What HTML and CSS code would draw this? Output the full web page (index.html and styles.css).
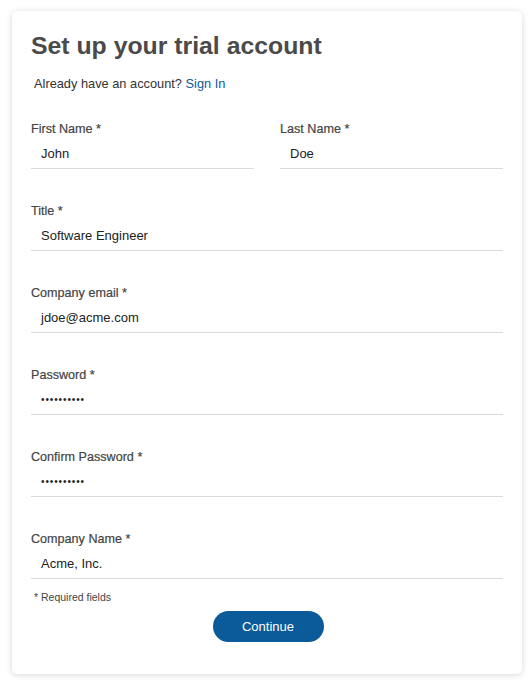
FILE: index.html
```html
<!DOCTYPE html>
<html lang="en">
<head>
<meta charset="utf-8">
<title>Set up your trial account</title>
<link rel="stylesheet" href="styles.css">
</head>
<body>
<main class="card">
  <h1 class="title">Set up your trial account</h1>
  <p class="signin">Already have an account? <a href="#">Sign In</a></p>
  <form class="form">
    <div class="row">
      <div class="field">
        <label>First Name *</label>
        <div class="value">John</div>
      </div>
      <div class="field">
        <label>Last Name *</label>
        <div class="value">Doe</div>
      </div>
    </div>
    <div class="field">
      <label>Title *</label>
      <div class="value">Software Engineer</div>
    </div>
    <div class="field">
      <label>Company email *</label>
      <div class="value">jdoe@acme.com</div>
    </div>
    <div class="field">
      <label>Password *</label>
      <div class="value dots">••••••••••</div>
    </div>
    <div class="field">
      <label>Confirm Password *</label>
      <div class="value dots">••••••••••</div>
    </div>
    <div class="field last">
      <label>Company Name *</label>
      <div class="value">Acme, Inc.</div>
    </div>
    <p class="req">* Required fields</p>
    <div class="actions"><button type="button" class="btn">Continue</button></div>
  </form>
</main>
</body>
</html>
```
FILE: styles.css
```css
html, body { margin: 0; padding: 0; background: #ffffff; }
body {
  font-family: "Liberation Sans", Arial, sans-serif;
  padding: 11px 8px 6px 12px;
  height: 680px;
  box-sizing: border-box;
}
.card {
  width: 510px;
  height: 663px;
  box-sizing: border-box;
  background: #fff;
  border-radius: 5px;
  box-shadow: 0 1px 6px rgba(0,0,0,0.16);
  padding: 19px 19px 0 19px;
}
.title {
  margin: 0;
  font-size: 24.8px;
  font-weight: bold;
  color: #4a4a4a;
  line-height: 32px;
}
.signin {
  margin: 13px 0 0 3px;
  font-size: 12.8px;
  color: #333;
  line-height: 18px;
}
.signin a { color: #0b5a99; text-decoration: none; }
.form { margin-top: 28px; }
.row { display: grid; grid-template-columns: 223px 223px; column-gap: 26px; }
.field { margin-bottom: 34px; }
.field.last { margin-bottom: 0; }
.field label {
  display: block;
  font-size: 12.6px;
  color: #444;
  line-height: 16px;
  height: 16px;
  -webkit-text-stroke: 0.2px #444;
}
.value {
  margin-top: 9px;
  padding: 0 0 6px 10px;
  font-size: 13px;
  color: #222;
  line-height: 16px;
  border-bottom: 1px solid #dcdcdc;
}
.value.dots { font-size: 10px; letter-spacing: 0.9px; line-height: 16px; }
.req {
  margin: 11px 0 0 3px;
  font-size: 10.5px;
  color: #444;
  line-height: 14px;
}
.actions { display: flex; justify-content: center; margin-top: 7px; }
.btn {
  width: 111px;
  height: 31px;
  border: none;
  border-radius: 16px;
  background: #0b5a99;
  color: #fff;
  font-family: "Liberation Sans", Arial, sans-serif;
  font-size: 13px;
  padding: 0;
  margin-left: 2px;
}
```
